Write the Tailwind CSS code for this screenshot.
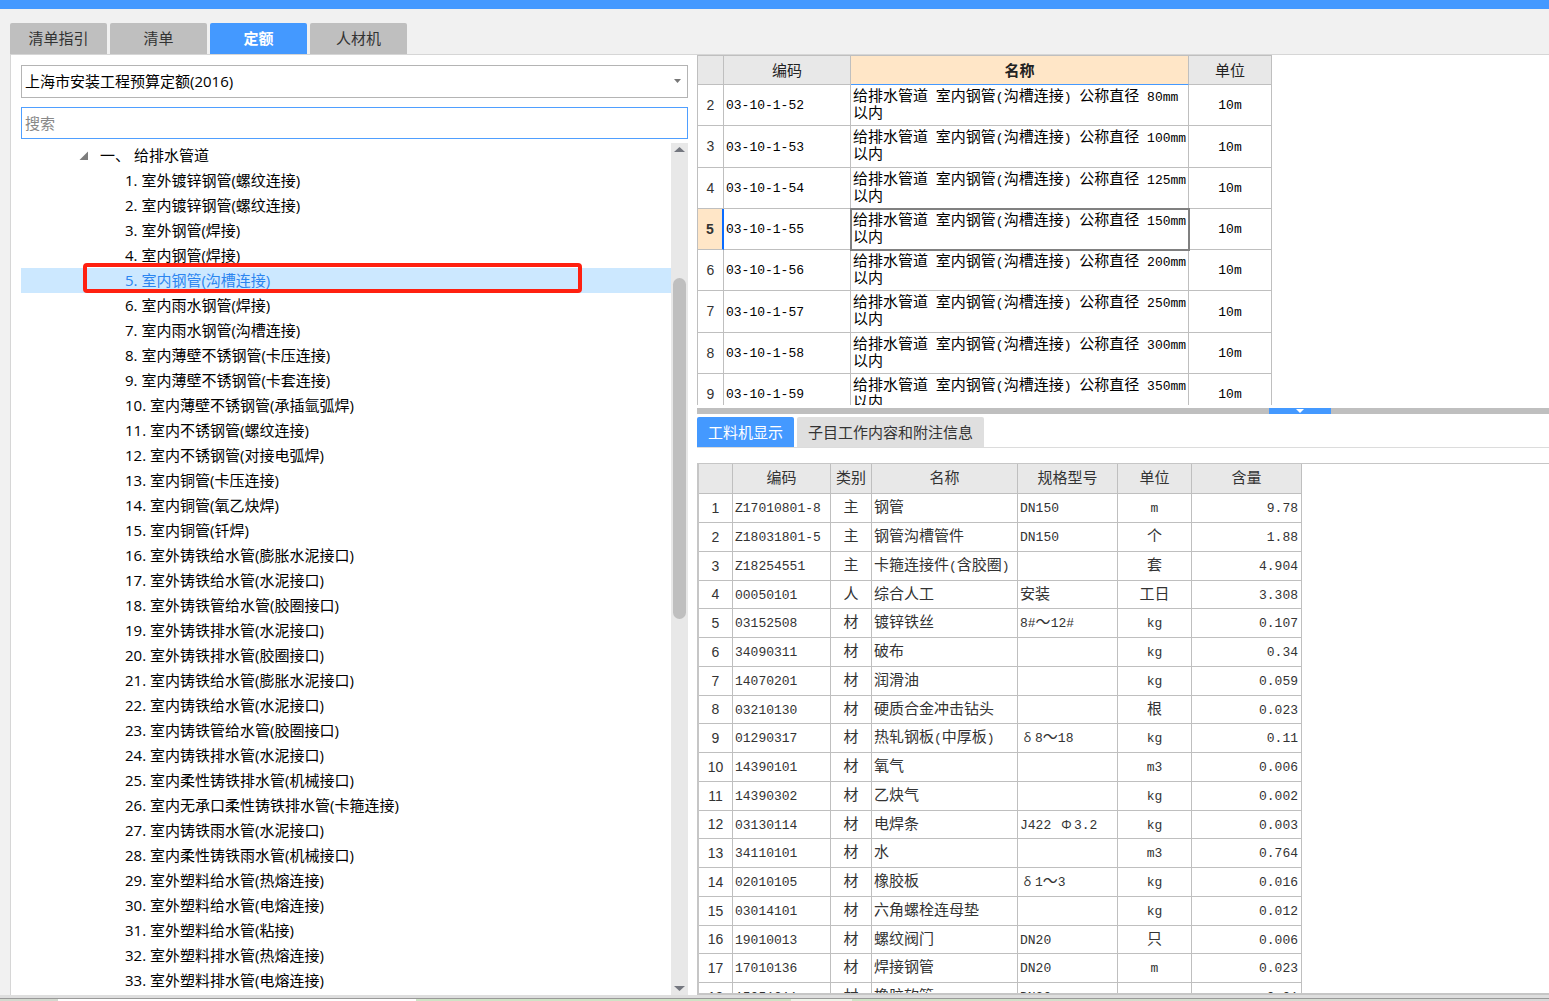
<!DOCTYPE html>
<html lang="zh-CN">
<head>
<meta charset="utf-8">
<title>定额查询</title>
<script src="https://cdn.jsdelivr.net/npm/@tailwindcss/browser@4"></script>
</head>
<body class="flex h-screen flex-col overflow-hidden bg-[#f1f1f1] font-['Open_Sans','Noto_Sans_CJK_SC',sans-serif] text-[15px] text-black">
<header class="h-[9px] shrink-0 bg-[#4499ff]"></header>

<nav class="flex shrink-0 gap-[3px] pt-[14px] pl-[10px] text-[#333]">
  <button class="h-[31px] w-[97px] rounded-t-[2px] bg-[#bfbfbf]">清单指引</button>
  <button class="h-[31px] w-[97px] rounded-t-[2px] bg-[#bfbfbf]">清单</button>
  <button class="h-[31px] w-[97px] rounded-t-[2px] bg-[#4499ff] font-bold text-white">定额</button>
  <button class="h-[31px] w-[97px] rounded-t-[2px] bg-[#bfbfbf]">人材机</button>
</nav>

<main class="ml-[10px] flex min-h-0 flex-1 border-t border-l border-[#d6d6d6] bg-white">
  <!-- quota chapter tree -->
  <section class="flex w-[686px] shrink-0 flex-col pt-[10px] pr-[9px] pl-[10px]">
    <div class="relative shrink-0">
      <select aria-label="定额库" class="block h-[33px] w-full appearance-none border border-[#b4b4b4] bg-white px-[3px] outline-none">
        <option>上海市安装工程预算定额(2016)</option>
      </select>
      <svg class="pointer-events-none absolute top-[14px] right-[7px] h-[4px] w-[7px]" viewBox="0 0 7 4"><path d="M0 0h7L3.5 4z" fill="#777"/></svg>
    </div>
    <input type="text" aria-label="搜索" placeholder="搜索" class="mt-[9px] block h-[32px] w-full shrink-0 border border-[#4f9fff] bg-white px-[3px] outline-none placeholder:text-[#888]">
    <div class="mt-[4px] flex min-h-0 flex-1">
      <div class="min-w-0 flex-1 overflow-hidden">
        <div class="flex h-[25px] items-center pl-[58px]">
          <svg class="mr-[12px] h-[9px] w-[9px]" viewBox="0 0 9 9"><path d="M9 .5V9H.5z" fill="#7d7d7d"/></svg>
          <span class="w-[34px]">一、</span><span>给排水管道</span>
        </div>
        <ul id="tree"></ul>
      </div>
      <div class="flex w-[17px] shrink-0 flex-col items-center bg-[#e8e8e8] py-[4px]">
        <svg class="h-[5px] w-[11px] shrink-0" viewBox="0 0 11 5"><path d="M0 5h11L5.500 0z" fill="#74777f"/></svg>
        <div class="mt-[126px] h-[341px] w-[13px] shrink-0 rounded-full bg-[#bfbfbf]"></div>
        <svg class="mt-auto h-[5px] w-[11px] shrink-0" viewBox="0 0 11 5"><path d="M0 0h11L5.500 5z" fill="#74777f"/></svg>
      </div>
    </div>
  </section>

  <section class="flex min-w-0 flex-1 flex-col">
    <!-- quota items -->
    <div class="h-[350px] shrink-0 overflow-hidden border-l border-[#bfbfbf]">
      <table class="w-[574px] table-fixed border-separate border-spacing-0 border-t border-[#bfbfbf] leading-[17px]">
        <colgroup><col class="w-[26px]"><col class="w-[127px]"><col class="w-[338px]"><col class="w-[83px]"></colgroup>
        <thead>
          <tr class="h-[29px] bg-[#e8e8e8] text-[#222]">
            <th class="border-r border-b border-[#bfbfbf]"></th>
            <th class="border-r border-b border-[#bfbfbf] font-normal">编码</th>
            <th class="border-r border-b border-r-[#bfbfbf] border-b-[#4499ff] bg-[#ffe6c7] font-bold">名称</th>
            <th class="border-r border-b border-[#bfbfbf] font-normal">单位</th>
          </tr>
        </thead>
        <tbody id="items"></tbody>
      </table>
    </div>

    <div class="mt-[3px] flex h-[6px] shrink-0 bg-[#bfbfbf]">
      <button aria-label="收起" class="ml-[572px] flex h-[6px] w-[62px] items-center justify-center bg-[#4499ff]">
        <svg class="h-[4px] w-[8px]" viewBox="0 0 8 4"><path d="M0 0h8L4 4z" fill="#fff"/></svg>
      </button>
    </div>

    <nav class="mt-[3px] flex shrink-0 gap-[3px] border-b border-[#dcdcdc] text-[#333]">
      <button class="h-[30px] w-[97px] rounded-t-[2px] bg-[#4499ff] text-white">工料机显示</button>
      <button class="h-[30px] w-[187px] rounded-t-[2px] bg-[#dfdfdf]">子目工作内容和附注信息</button>
    </nav>

    <!-- labour, material and machine content of the selected item -->
    <div class="mt-[15px] min-h-0 flex-1 overflow-hidden border-t border-b-2 border-l-2 border-[#c6c6c6] text-[#333]">
      <table class="w-[603px] table-fixed border-separate border-spacing-0 leading-[17px]">
        <colgroup><col class="w-[34px]"><col class="w-[98px]"><col class="w-[41px]"><col class="w-[146px]"><col class="w-[100px]"><col class="w-[74px]"><col class="w-[110px]"></colgroup>
        <thead>
          <tr class="h-[30px] bg-[#e8e8e8] [&>th]:border-r [&>th]:border-b [&>th]:border-[#bfbfbf] [&>th]:pb-[2px] [&>th]:font-normal">
            <th></th><th>编码</th><th>类别</th><th>名称</th><th>规格型号</th><th>单位</th><th>含量</th>
          </tr>
        </thead>
        <tbody id="parts"></tbody>
      </table>
    </div>
  </section>
</main>

<footer class="shrink-0 border-t-3 border-[#dedede]">
  <div class="flex h-[3px] border-t border-[#999]">
    <div class="w-[58px] bg-[#d3d9cf]"></div><div class="w-[358px] bg-white"></div><div class="w-[375px] bg-[#cfe3c6]"></div><div class="w-[61px] bg-[#eef5ea]"></div><div class="flex-1 bg-linear-to-r from-[#cfe3c6] to-[#d8d8d8]"></div>
  </div>
</footer>

<script>
const tree = ['室外镀锌钢管(螺纹连接)','室内镀锌钢管(螺纹连接)','室外钢管(焊接)','室内钢管(焊接)','室内钢管(沟槽连接)','室内雨水钢管(焊接)','室内雨水钢管(沟槽连接)','室内薄壁不锈钢管(卡压连接)','室内薄壁不锈钢管(卡套连接)','室内薄壁不锈钢管(承插氩弧焊)','室内不锈钢管(螺纹连接)','室内不锈钢管(对接电弧焊)','室内铜管(卡压连接)','室内铜管(氧乙炔焊)','室内铜管(钎焊)','室外铸铁给水管(膨胀水泥接口)','室外铸铁给水管(水泥接口)','室外铸铁管给水管(胶圈接口)','室外铸铁排水管(水泥接口)','室外铸铁排水管(胶圈接口)','室内铸铁给水管(膨胀水泥接口)','室内铸铁给水管(水泥接口)','室内铸铁管给水管(胶圈接口)','室内铸铁排水管(水泥接口)','室内柔性铸铁排水管(机械接口)','室内无承口柔性铸铁排水管(卡箍连接)','室内铸铁雨水管(水泥接口)','室内柔性铸铁雨水管(机械接口)','室外塑料给水管(热熔连接)','室外塑料给水管(电熔连接)','室外塑料给水管(粘接)','室外塑料排水管(热熔连接)','室外塑料排水管(电熔连接)'];
document.getElementById('tree').innerHTML = tree.map((name, i) => {
  const on = i === 4;
  return `<li class="relative h-[25px] pl-[104px] ${on ? 'bg-[#cce8ff]' : ''}">
    <a href="#" class="block leading-[25px] whitespace-nowrap ${on ? 'text-[#2b85f0]' : ''}">${i + 1}. ${name}</a>
    ${on ? '<span class="pointer-events-none absolute -top-[5px] left-[62px] h-[30px] w-[499px] rounded-[4px] border-4 border-[#ff2010]"></span>' : ''}
  </li>`;
}).join('');

// Latin runs use a half-width monospace face beside the full-width characters.
const mono = s => s.replace(/[\x20-\x7e]+/g, m => `<span class="font-['Liberation_Mono',monospace] text-[13px] leading-none whitespace-pre">${m}</span>`);
const line = 'border-r border-b border-[#bfbfbf]';

const sizes = [80, 100, 125, 150, 200, 250, 300, 350];
document.getElementById('items').innerHTML = sizes.map((d, i) => {
  const on = i === 3;
  return `<tr class="${i % 4 === 1 ? 'h-[42px]' : 'h-[41px]'}">
    <td class="border-b border-b-[#bfbfbf] text-center font-['Liberation_Sans',sans-serif] text-[14px] text-[#333] ${on ? 'border-r-2 border-r-[#0a6cff] bg-[#ffe6c7] font-bold' : 'border-r border-r-[#bfbfbf]'}">${i + 2}</td>
    <td class="${line} pb-[3px] pl-[2px]">${mono('03-10-1-' + (52 + i))}</td>
    <td class="${line} pt-[2px] pl-[2px] align-top whitespace-nowrap ${on ? 'outline-2 -outline-offset-1 outline-[#808080]' : ''}">${mono(`给排水管道 室内钢管(沟槽连接) 公称直径 ${d}mm`)}<br>以内</td>
    <td class="${line} pb-[3px] text-center">${mono('10m')}</td>
  </tr>`;
}).join('');

const parts = [
  ['Z17010801-8','主','钢管','DN150','m','9.78'],
  ['Z18031801-5','主','钢管沟槽管件','DN150','个','1.88'],
  ['Z18254551','主','卡箍连接件(含胶圈)','','套','4.904'],
  ['00050101','人','综合人工','安装','工日','3.308'],
  ['03152508','材','镀锌铁丝','8#～12#','kg','0.107'],
  ['34090311','材','破布','','kg','0.34'],
  ['14070201','材','润滑油','','kg','0.059'],
  ['03210130','材','硬质合金冲击钻头','','根','0.023'],
  ['01290317','材','热轧钢板(中厚板)','δ8～18','kg','0.11'],
  ['14390101','材','氧气','','m3','0.006'],
  ['14390302','材','乙炔气','','kg','0.002'],
  ['03130114','材','电焊条','J422 Φ3.2','kg','0.003'],
  ['34110101','材','水','','m3','0.764'],
  ['02010105','材','橡胶板','δ1～3','kg','0.016'],
  ['03014101','材','六角螺栓连母垫','','kg','0.012'],
  ['19010013','材','螺纹阀门','DN20','只','0.006'],
  ['17010136','材','焊接钢管','DN20','m','0.023'],
  ['15051011','材','橡胶软管','DN20','m','0.01'],
];
// Greek letters take a full-width cell of their own.
const spec = s => s.split(/([δΦ])/).map(t => /[δΦ]/.test(t) ? `<span class="inline-block w-[15px] text-center text-[13px] leading-none">${t}</span>` : mono(t)).join('');
document.getElementById('parts').innerHTML = parts.map((p, i) => `<tr class="${i % 4 === 3 ? 'h-[28px]' : 'h-[29px]'} whitespace-nowrap">
    <td class="${line} text-center font-['Liberation_Sans',sans-serif] text-[14px]">${i + 1}</td>
    <td class="${line} pb-[3px] pl-[2px]">${mono(p[0])}</td>
    <td class="${line} pb-[3px] text-center">${p[1]}</td>
    <td class="${line} pb-[3px] pl-[2px]">${mono(p[2])}</td>
    <td class="${line} pb-[3px] pl-[2px]">${spec(p[3])}</td>
    <td class="${line} pb-[3px] text-center">${mono(p[4])}</td>
    <td class="${line} pr-[3px] pb-[3px] text-right">${mono(p[5])}</td>
  </tr>`).join('');
</script>
</body>
</html>
